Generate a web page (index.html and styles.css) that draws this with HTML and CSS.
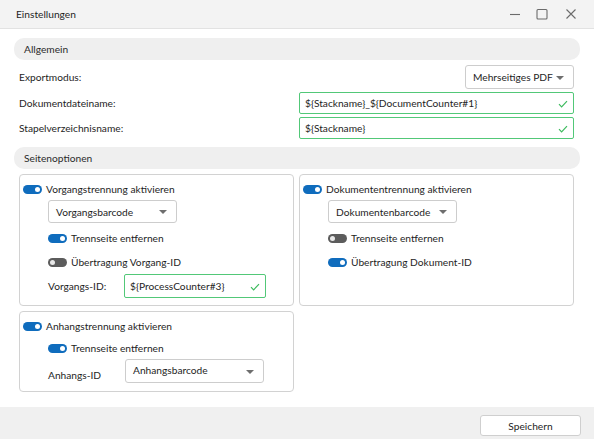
FILE: index.html
```html
<!DOCTYPE html>
<html lang="de">
<head>
<meta charset="utf-8">
<title>Einstellungen</title>
<link rel="stylesheet" href="styles.css">
</head>
<body>
<div class="window">
  <header class="titlebar">
    <span class="title">Einstellungen</span>
    <div class="caption-buttons">
      <svg class="cap cap-min" width="14" height="14" viewBox="0 0 14 14"><path d="M2 7.5h10" stroke="#6b6b6b" stroke-width="1.1" fill="none"/></svg>
      <svg class="cap cap-max" width="14" height="14" viewBox="0 0 14 14"><rect x="2" y="2.5" width="10" height="9.5" rx="1" stroke="#6b6b6b" stroke-width="1.1" fill="none"/></svg>
      <svg class="cap cap-close" width="14" height="14" viewBox="0 0 14 14"><path d="M2.5 2.5l9 9M11.5 2.5l-9 9" stroke="#6b6b6b" stroke-width="1.1" fill="none"/></svg>
    </div>
  </header>

  <main class="content">
    <div class="section-header">Allgemein</div>

    <div class="form-row row-first">
      <span class="label">Exportmodus:</span>
      <div class="select select-export"><span>Mehrseitiges PDF</span><span class="arrow"></span></div>
    </div>
    <div class="form-row">
      <span class="label">Dokumentdateiname:</span>
      <div class="input valid input-wide"><span>${Stackname}_${DocumentCounter#1}</span><svg class="check" width="10" height="8" viewBox="0 0 10 8"><path d="M1 4.2l2.6 2.6L9 1.2" stroke="#3dbb5e" stroke-width="1.2" fill="none"/></svg></div>
    </div>
    <div class="form-row">
      <span class="label">Stapelverzeichnisname:</span>
      <div class="input valid input-wide"><span>${Stackname}</span><svg class="check" width="10" height="8" viewBox="0 0 10 8"><path d="M1 4.2l2.6 2.6L9 1.2" stroke="#3dbb5e" stroke-width="1.2" fill="none"/></svg></div>
    </div>

    <div class="section-header section-second">Seitenoptionen</div>

    <div class="panels">
      <section class="panel panel-tall">
        <div class="toggle-row"><span class="toggle on"></span><span>Vorgangstrennung aktivieren</span></div>
        <div class="sub">
          <div class="select select-panel"><span>Vorgangsbarcode</span><span class="arrow"></span></div>
          <div class="toggle-row tr-2"><span class="toggle on"></span><span>Trennseite entfernen</span></div>
          <div class="toggle-row tr-3"><span class="toggle off"></span><span>Übertragung Vorgang-ID</span></div>
          <div class="id-row">
            <span class="id-label">Vorgangs-ID:</span>
            <div class="input valid input-id"><span>${ProcessCounter#3}</span><svg class="check" width="10" height="8" viewBox="0 0 10 8"><path d="M1 4.2l2.6 2.6L9 1.2" stroke="#3dbb5e" stroke-width="1.2" fill="none"/></svg></div>
          </div>
        </div>
      </section>

      <section class="panel panel-tall">
        <div class="toggle-row"><span class="toggle on"></span><span>Dokumententrennung aktivieren</span></div>
        <div class="sub">
          <div class="select select-panel"><span>Dokumentenbarcode</span><span class="arrow"></span></div>
          <div class="toggle-row tr-2"><span class="toggle off"></span><span>Trennseite entfernen</span></div>
          <div class="toggle-row tr-3"><span class="toggle on"></span><span>Übertragung Dokument-ID</span></div>
        </div>
      </section>

      <section class="panel panel-short">
        <div class="toggle-row"><span class="toggle on"></span><span>Anhangstrennung aktivieren</span></div>
        <div class="sub">
          <div class="toggle-row tr-b2"><span class="toggle on"></span><span>Trennseite entfernen</span></div>
          <div class="id-row id-row-b">
            <span class="id-label id-label-b">Anhangs-ID</span>
            <div class="select select-att"><span>Anhangsbarcode</span><span class="arrow"></span></div>
          </div>
        </div>
      </section>
    </div>
  </main>

  <footer class="footer">
    <button class="btn">Speichern</button>
  </footer>
</div>
</body>
</html>
```

FILE: styles.css
```css
* { box-sizing: border-box; }

html, body {
  margin: 0;
  padding: 0;
  background: #ffffff;
}

body {
  font-family: "Lato", "Liberation Sans", sans-serif;
  font-size: 10.2px;
  color: #1e1e1e;
}

.window {
  width: 594px;
  height: 439px;
  display: flex;
  flex-direction: column;
  background: #ffffff;
  overflow: hidden;
}

.titlebar {
  height: 29px;
  flex: 0 0 29px;
  background: #f3f3f3;
  border-bottom: 1px solid #e2e2e2;
  display: flex;
  align-items: center;
  justify-content: space-between;
  padding: 0 16px 0 16px;
}

.title {
  color: #1e1e1e;
}

.caption-buttons {
  display: flex;
  align-items: center;
}

.cap { display: block; }
.cap-max { margin-left: 13px; }
.cap-close { margin-left: 15px; }

.content {
  flex: 1 1 auto;
  padding: 9px 14px 0 14px;
  display: flex;
  flex-direction: column;
}

.section-header {
  height: 22px;
  background: #efefef;
  border-radius: 10px;
  display: flex;
  align-items: center;
  padding-left: 10px;
  color: #2b2b2b;
}

.section-second { margin-top: 8px; }

.form-row {
  display: flex;
  align-items: center;
  justify-content: space-between;
  padding: 0 6px 0 5px;
  margin-top: 3px;
}

.row-first { margin-top: 5px; }

.select {
  height: 24px;
  border: 1px solid #cdcdcd;
  border-radius: 3px;
  background: #ffffff;
  display: flex;
  align-items: center;
  justify-content: space-between;
  padding: 0 9px 0 7px;
}

.arrow {
  width: 0;
  height: 0;
  border-left: 4px solid transparent;
  border-right: 4px solid transparent;
  border-top: 4px solid #6e6e6e;
  margin-top: 1px;
  flex: 0 0 auto;
}

.select-export { width: 109px; }

.input {
  height: 22px;
  border: 1px solid #cdcdcd;
  border-radius: 2px;
  background: #ffffff;
  display: flex;
  align-items: center;
  justify-content: space-between;
  padding: 0 5px 0 5px;
}

.input.valid { border-color: #52c878; }

.check { display: block; margin-top: 2px; }

.input-wide { width: 275px; }

.panels {
  margin-top: 5px;
  padding: 0 6px 0 5px;
  display: grid;
  grid-template-columns: 1fr 1fr;
  column-gap: 5px;
  row-gap: 5px;
  align-items: start;
}

.panel {
  border: 1px solid #d2d2d2;
  border-radius: 4px;
  padding: 6px 0 0 3px;
}

.panel-tall { height: 132px; }
.panel-short { height: 81px; }

.toggle-row {
  display: flex;
  align-items: center;
  gap: 4px;
  height: 16px;
}

.toggle {
  position: relative;
  width: 19px;
  height: 9px;
  border-radius: 5px;
  flex: 0 0 19px;
}

.toggle::after {
  content: "";
  position: absolute;
  top: 2px;
  width: 5px;
  height: 5px;
  border-radius: 50%;
  background: #ffffff;
}

.toggle.on { background: #0f6cbd; }
.toggle.on::after { right: 2px; }

.toggle.off { background: #5c5c5c; }
.toggle.off::after { left: 2px; background: #e9e9e9; }

.sub {
  margin-left: 25px;
  display: flex;
  flex-direction: column;
  align-items: flex-start;
}

.select-panel {
  margin-top: 3px;
  width: 129px;
  height: 23px;
}

.tr-2 { margin-top: 7px; }
.tr-3 { margin-top: 8px; }
.tr-b2 { margin-top: 6px; }

.id-row {
  display: flex;
  align-items: center;
  margin-top: 4px;
}

.id-label { width: 76px; }

.input-id {
  width: 142px;
  height: 24px;
}

.id-row-b { margin-top: 3px; }
.id-label-b { width: 77px; padding-top: 7px; }

.select-att {
  width: 139px;
  height: 24px;
  align-items: flex-start;
  padding-top: 4px;
}

.select-att .arrow { margin-top: 6px; }

.footer {
  flex: 0 0 32px;
  height: 32px;
  background: #f0f0f0;
  display: flex;
  justify-content: flex-end;
  align-items: flex-start;
  padding: 8px 13px 0 0;
}

.btn {
  width: 101px;
  height: 21px;
  border: 1px solid #cfcfcf;
  border-radius: 3px;
  background: #ffffff;
  font-family: "Lato", "Liberation Sans", sans-serif;
  font-size: 10.2px;
  color: #1e1e1e;
  padding: 0;
}
```
